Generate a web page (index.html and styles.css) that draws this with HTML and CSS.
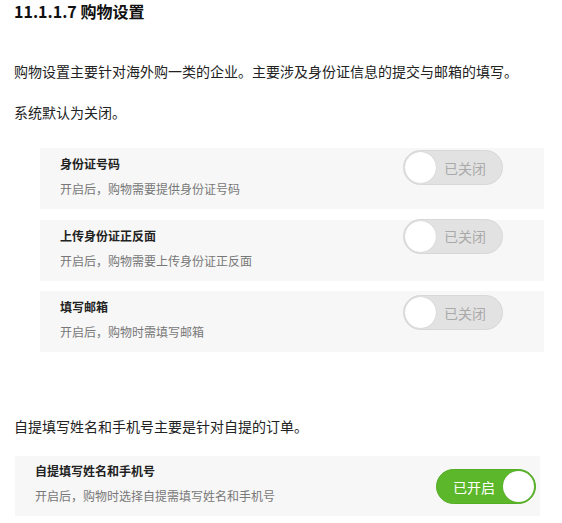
FILE: index.html
```html
<!DOCTYPE html>
<html lang="zh">
<head>
<meta charset="utf-8">
<link rel="stylesheet" href="styles.css">
</head>
<body>
<h3 class="title">11.1.1.7 购物设置</h3>
<p class="para p1">购物设置主要针对海外购一类的企业。主要涉及身份证信息的提交与邮箱的填写。</p>
<p class="para p2">系统默认为关闭。</p>
<div class="group">
  <div class="panel">
    <div class="info">
      <div class="name">身份证号码</div>
      <div class="desc">开启后，购物需要提供身份证号码</div>
    </div>
    <div class="toggle off t1"><span class="knob"></span><span class="label">已关闭</span></div>
  </div>
  <div class="panel">
    <div class="info">
      <div class="name">上传身份证正反面</div>
      <div class="desc">开启后，购物需要上传身份证正反面</div>
    </div>
    <div class="toggle off t2"><span class="knob"></span><span class="label">已关闭</span></div>
  </div>
  <div class="panel">
    <div class="info">
      <div class="name">填写邮箱</div>
      <div class="desc">开启后，购物时需填写邮箱</div>
    </div>
    <div class="toggle off t3"><span class="knob"></span><span class="label">已关闭</span></div>
  </div>
</div>
<p class="para p3">自提填写姓名和手机号主要是针对自提的订单。</p>
<div class="panel wide">
  <div class="info">
    <div class="name">自提填写姓名和手机号</div>
    <div class="desc">开启后，购物时选择自提需填写姓名和手机号</div>
  </div>
  <div class="toggle on"><span class="label">已开启</span><span class="knob"></span></div>
</div>
</body>
</html>
```
FILE: styles.css
```css
html, body {
  margin: 0;
  padding: 0;
  background: #fff;
}
body {
  font-family: "Noto Sans CJK SC", "Noto Sans", sans-serif;
  color: #222;
  padding: 0 0 0 14px;
  width: 548px;
}
.title {
  margin: 0;
  padding-top: 0;
  font-size: 16px;
  line-height: 22px;
  font-weight: bold;
  color: #111;
}
.para {
  margin: 0;
  font-size: 14px;
  line-height: 20px;
  color: #222;
}
.p1 { margin-top: 39px; }
.p2 { margin-top: 21px; }
.group {
  margin: 26px 0 0 26px;
  width: 504px;
  display: flex;
  flex-direction: column;
  gap: 10.5px;
}
.panel {
  background: #f7f7f7;
  height: 61px;
  display: flex;
  justify-content: space-between;
  align-items: flex-start;
  box-sizing: border-box;
  padding: 0 41px 0 20px;
}
.info {
  padding-top: 7px;
}
.name {
  font-size: 12px;
  font-weight: bold;
  line-height: 18px;
  color: #222;
}
.desc {
  margin-top: 7px;
  font-size: 12px;
  line-height: 18px;
  color: #777;
}
.toggle {
  margin-top: 2px;
  width: 100px;
  height: 35px;
  box-sizing: border-box;
  border-radius: 18px;
  display: flex;
  align-items: center;
  font-size: 14px;
}
.toggle.off {
  background: #e2e2e2;
  border: 1px solid #d8d8d8;
  color: #aaa;
  padding-left: 1px;
}
.toggle.off .label { margin-left: 8px; }
.t2 { margin-top: -1px; }
.t3 { margin-top: 4px; }
.knob {
  width: 31px;
  height: 31px;
  border-radius: 50%;
  background: #fff;
  box-shadow: 0 0 1px rgba(0,0,0,0.2);
}
.p3 {
  margin-top: 64px;
}
.wide {
  margin-top: 20px;
  margin-left: 1px;
  width: 525px;
  padding: 0 4px 0 20px;
  height: 60px;
}
.wide .info { padding-top: 6px; }
.toggle.on {
  margin-top: 13px;
  background: #5cb72b;
  border: 1px solid #55ad26;
  color: #fff;
  justify-content: space-between;
  padding: 0 1px 0 16px;
}
```
